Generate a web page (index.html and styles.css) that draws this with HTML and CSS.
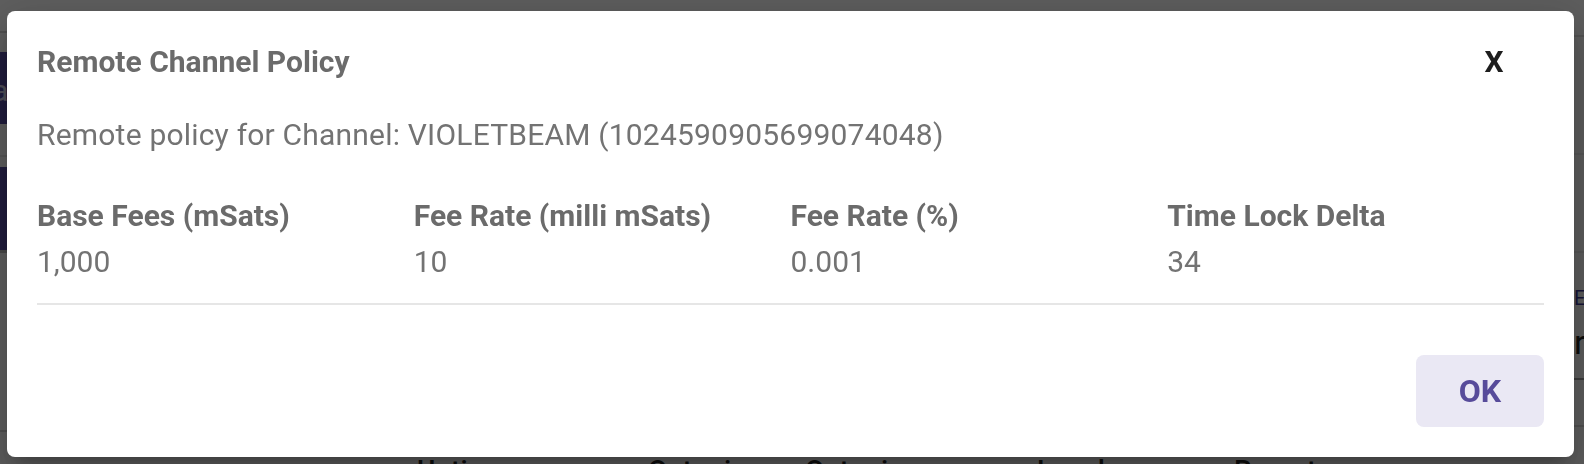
FILE: index.html
```html
<!DOCTYPE html>
<html lang="en">
<head>
<meta charset="utf-8">
<title>Remote Channel Policy</title>
<link rel="stylesheet" href="styles.css">
</head>
<body>
<div class="page">
  <aside class="sidebar">
    <div class="sb-header"></div>
    <div class="sb-brand">a</div>
    <div class="sb-item"></div>
    <div class="sb-pill"></div>
    <div class="sb-rest"></div>
  </aside>
  <main class="main">
    <div class="topbar"></div>
    <div class="row row-a"></div>
    <div class="row row-b"></div>
    <div class="row row-c"><span class="row-link">E</span></div>
    <div class="row row-d"><span class="row-text">r</span></div>
    <div class="row row-e"></div>
    <div class="table-head">
      <span>Uptime</span><span>Outgoing</span><span>Outgoing</span><span>Local</span><span>Remote</span>
    </div>
  </main>
</div>

<div class="scrim">
  <section class="dialog" role="dialog" aria-labelledby="dlg-title">
    <header class="dialog-head">
      <h2 class="title" id="dlg-title">Remote Channel Policy</h2>
      <button class="close" type="button" aria-label="Close">X</button>
    </header>
    <p class="subtitle">Remote policy for Channel: VIOLETBEAM (1024590905699074048)</p>
    <div class="stats">
      <div class="stat">
        <div class="stat-label">Base Fees (mSats)</div>
        <div class="stat-value">1,000</div>
      </div>
      <div class="stat">
        <div class="stat-label">Fee Rate (milli mSats)</div>
        <div class="stat-value">10</div>
      </div>
      <div class="stat">
        <div class="stat-label">Fee Rate (%)</div>
        <div class="stat-value">0.001</div>
      </div>
      <div class="stat">
        <div class="stat-label">Time Lock Delta</div>
        <div class="stat-value">34</div>
      </div>
    </div>
    <hr class="divider">
    <div class="actions">
      <button class="ok" type="button">OK</button>
    </div>
  </section>
</div>
</body>
</html>
```

FILE: styles.css
```css
* { box-sizing: border-box; }

html, body {
  margin: 0;
  padding: 0;
  width: 1584px;
  height: 464px;
  overflow: hidden;
  font-family: Roboto, "Liberation Sans", Arial, sans-serif;
}

body {
  background: #f4f4f4;
}

/* ---------- underlying page (covered by scrim) ---------- */
.page {
  display: flex;
  height: 464px;
  overflow: hidden;
}

.sidebar {
  width: 220px;
  display: flex;
  flex-direction: column;
  background: #f7f7f7;
}

.sidebar > div { flex-shrink: 0; }

.sb-header {
  height: 33px;
  border-bottom: 2px solid #cfcfcf;
}

.sb-brand {
  height: 72px;
  margin-top: 19px;
  background: #544b9f;
  color: #cfcde6;
  font-size: 30px;
  line-height: 78px;
  text-indent: -8px;
}

.sb-item {
  height: 33px;
  border-bottom: 2px solid #e0e0e0;
}

.sb-pill {
  height: 83px;
  margin-top: 10px;
  background: #544b9f;
  border-radius: 0 40px 40px 0;
}

.sb-rest {
  flex: 1;
  border-top: 3px solid #bdbdbd;
}

.sb-rest::after {
  content: "";
  display: block;
  height: 177px;
  border-bottom: 2px solid #d0d0d0;
}

.main {
  flex: 1;
  display: flex;
  flex-direction: column;
  overflow: hidden;
}

.topbar {
  flex-shrink: 0;
  height: 37px;
  border-bottom: 2px solid #d6d6d6;
}

.row {
  flex-shrink: 0;
  border-bottom: 2px solid #e2e2e2;
  display: flex;
  justify-content: flex-end;
}

.row-a { height: 118px; }
.row-b { height: 98px; }
.row-c { height: 62px; border-bottom: 0; align-items: flex-end; padding-bottom: 4px; }
.row-d { height: 65px; border-bottom: 2px solid #9a9a9a; align-items: center; padding-bottom: 10px; }
.row-e { height: 47px; border-bottom: 2px solid #d0d0d0; }

.row-link {
  width: 10px;
  overflow: hidden;
  color: #3a3490;
  font-size: 20px;
  line-height: 26px;
}

.row-text {
  width: 10px;
  overflow: hidden;
  color: #222;
  font-size: 34px;
  line-height: 40px;
}

.table-head {
  flex: 1;
  min-height: 0;
  display: grid;
  grid-template-columns: 231px 157px 232px 197px auto;
  align-items: start;
  padding: 28px 0 0 197px;
  color: #222;
  font-size: 28px;
  line-height: 32px;
  font-weight: 500;
}

/* ---------- scrim + dialog ---------- */
.scrim {
  position: fixed;
  inset: 0;
  background: rgba(0, 0, 0, 0.62);
  padding: 11px 10px 7px 7px;
  display: flex;
}

.dialog {
  flex: 1;
  background: #ffffff;
  border-radius: 8px;
  padding: 30px;
  display: flex;
  flex-direction: column;
  box-shadow: 0 11px 15px -7px rgba(0, 0, 0, 0.2),
              0 24px 38px 3px rgba(0, 0, 0, 0.14),
              0 9px 46px 8px rgba(0, 0, 0, 0.12);
}

.dialog-head {
  display: flex;
  align-items: center;
  justify-content: space-between;
  height: 42px;
}

.title {
  margin: 0;
  font-size: 30px;
  line-height: 42px;
  font-weight: 700;
  color: #6b6b6b;
}

.close {
  width: 60px;
  height: 42px;
  margin-right: 20px;
  padding: 0;
  border: 0;
  background: none;
  font-family: inherit;
  font-size: 30px;
  line-height: 42px;
  font-weight: 700;
  color: #1e1e1e;
  text-align: center;
}

.subtitle {
  margin: 31px 0 0;
  font-size: 30px;
  line-height: 42px;
  letter-spacing: 0.2px;
  color: #737373;
}

.stats {
  margin-top: 39px;
  display: grid;
  grid-template-columns: repeat(4, 1fr);
}

.stat-label {
  font-size: 30px;
  line-height: 42px;
  font-weight: 700;
  color: #6b6b6b;
}

.stat-value {
  margin-top: 4px;
  font-size: 30px;
  line-height: 42px;
  color: #737373;
}

.divider {
  margin: 20px 0 0;
  height: 2px;
  border: 0;
  background: #e6e6e6;
}

.actions {
  margin-top: 50px;
  display: flex;
  justify-content: flex-end;
}

.ok {
  width: 128px;
  height: 72px;
  border: 0;
  border-radius: 8px;
  background: #eae8f4;
  color: #574b9a;
  font-family: inherit;
  font-size: 32px;
  font-weight: 700;
  padding: 0;
}
```
